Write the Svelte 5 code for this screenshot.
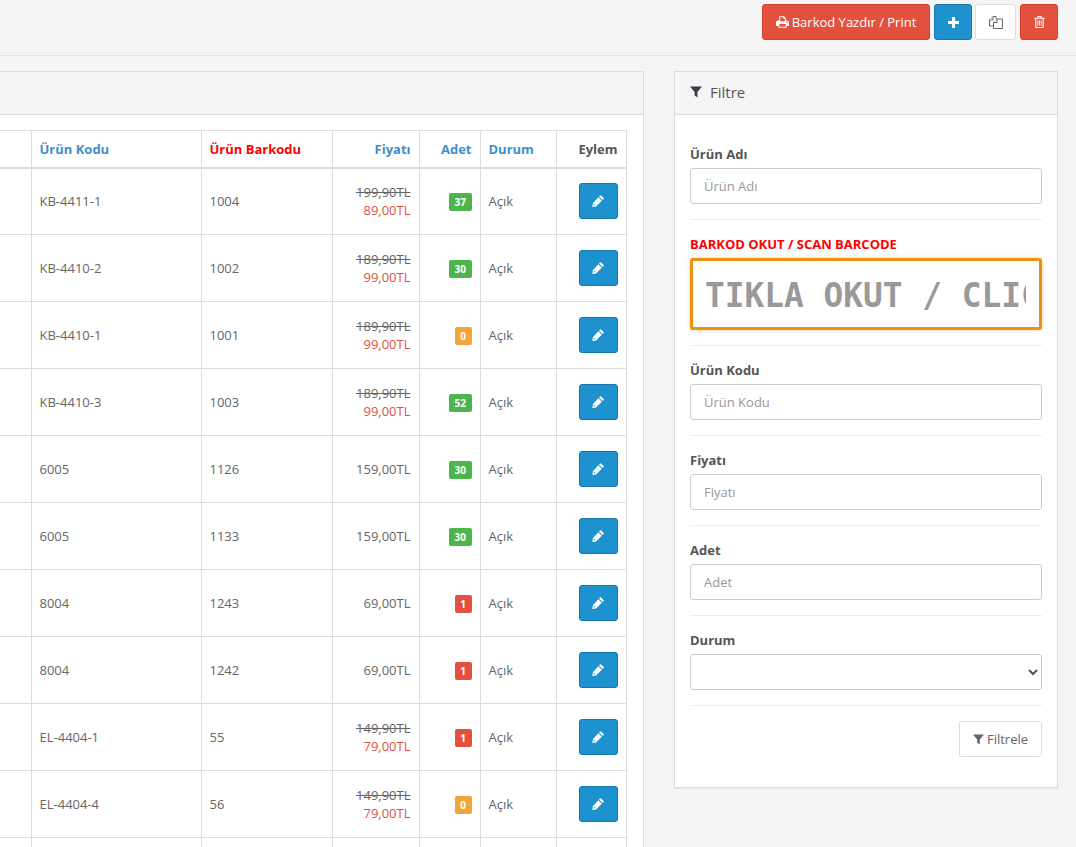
<script>
  const rows = [
    { code: 'KB-4411-1', bar: '1004', old: '199,90TL', price: '89,00TL', qty: 37, tone: 'ok' },
    { code: 'KB-4410-2', bar: '1002', old: '189,90TL', price: '99,00TL', qty: 30, tone: 'ok' },
    { code: 'KB-4410-1', bar: '1001', old: '189,90TL', price: '99,00TL', qty: 0, tone: 'warn' },
    { code: 'KB-4410-3', bar: '1003', old: '189,90TL', price: '99,00TL', qty: 52, tone: 'ok' },
    { code: '6005', bar: '1126', price: '159,00TL', qty: 30, tone: 'ok' },
    { code: '6005', bar: '1133', price: '159,00TL', qty: 30, tone: 'ok' },
    { code: '8004', bar: '1243', price: '69,00TL', qty: 1, tone: 'bad' },
    { code: '8004', bar: '1242', price: '69,00TL', qty: 1, tone: 'bad' },
    { code: 'EL-4404-1', bar: '55', old: '149,90TL', price: '79,00TL', qty: 1, tone: 'bad' },
    { code: 'EL-4404-4', bar: '56', old: '149,90TL', price: '79,00TL', qty: 0, tone: 'warn' },
    { code: '', bar: '', price: '', qty: null, tone: 'ok', blank: true }
  ];
  const fields = [
    { label: 'Ürün Kodu' },
    { label: 'Fiyatı' },
    { label: 'Adet' }
  ];
</script>

<div class="page">
  <header class="top">
    <button class="btn red print">
      <svg class="ic" viewBox="0 0 16 14" width="13" height="12"><path fill="currentColor" d="M4 0h6l2 2v3h1.500A2.500 2.500 0 0 1 16 7.500V12h-3v2H3v-2H0V7.500A2.500 2.500 0 0 1 2.500 5H4V0zm1.200 1.200V6h5.600V3H9V1.200H5.200zM4.200 9.500v3.300h7.600V9.500H4.200zM13.500 6.500a.8.8 0 1 0 0 1.600.8.8 0 0 0 0-1.600z"/></svg>
      Barkod Yazdır / Print
    </button>
    <button class="btn blue sq">
      <svg viewBox="0 0 12 12" width="11" height="11"><path fill="currentColor" d="M4.300 0h3.400v4.300H12v3.400H7.700V12H4.300V7.700H0V4.300h4.300z"/></svg>
    </button>
    <button class="btn white sq copy">
      <svg viewBox="0 0 14 14" width="14" height="14" fill="#fff" stroke="#666" stroke-width="1"><path d="M.5 5L4 1.500h3V4"/><path d="M.5 5v6h4"/><path d="M.5 5H4V1.500"/><path d="M4.500 7.500L8 4h5.500v9.500h-9z"/><path d="M4.500 7.500H8V4"/></svg>
    </button>
    <button class="btn red sq">
      <svg viewBox="0 0 12 14" width="11" height="12"><path fill="currentColor" d="M4 0h4l1 2h3v1.300h-1V13a1 1 0 0 1-1 1H2a1 1 0 0 1-1-1V3.300H0V2h3l1-2zm.6 1.200L4.300 2h3.400l-.3-.8H4.600zM2.300 3.300v9.400h7.400V3.300H2.300zM3.500 5h1v6.500h-1V5zm2 0h1v6.500h-1V5zm2 0h1v6.500h-1V5z"/></svg>
    </button>
  </header>

  <main class="content">
    <section class="panel list">
      <div class="head"></div>
      <div class="body">
        <table>
          <colgroup>
            <col class="c0" /><col class="c1" /><col class="c2" /><col class="c3" /><col class="c4" /><col class="c5" /><col class="c6" />
          </colgroup>
          <thead>
            <tr>
              <th></th>
              <th class="link">Ürün Kodu</th>
              <th class="hot">Ürün Barkodu</th>
              <th class="link r">Fiyatı</th>
              <th class="link r">Adet</th>
              <th class="link">Durum</th>
              <th class="r">Eylem</th>
            </tr>
          </thead>
          <tbody>
            {#each rows as row}
              <tr>
                <td></td>
                <td class="num">{row.code}</td>
                <td class="num">{row.bar}</td>
                <td class="r">
                  {#if row.old}
                    <div class="old">{row.old}</div>
                    <div class="sale">{row.price}</div>
                  {:else}
                    {row.price}
                  {/if}
                </td>
                <td class="r">
                  {#if !row.blank}<span class="badge {row.tone}">{row.qty}</span>{/if}
                </td>
                <td>{row.blank ? '' : 'Açık'}</td>
                <td class="r">
                  {#if !row.blank}
                    <button class="btn blue edit">
                      <svg viewBox="0 0 12 12" width="12" height="12"><path fill="currentColor" d="M9 .4l2.600 2.600a.8.8 0 0 1 0 1.100l-1 1L7 1.500l1-1.100A.8.8 0 0 1 9 .4zM6.300 2.200l3.500 3.500L4 11.500l-3.700.6.600-3.800 5.400-6.100zM2 8.700l-.4 1.800 1.800-.4z"/></svg>
                    </button>
                  {/if}
                </td>
              </tr>
            {/each}
          </tbody>
        </table>
      </div>
    </section>

    <aside class="panel filter">
      <div class="head title">
        <svg viewBox="0 0 12 12" width="12" height="12"><path fill="currentColor" d="M0 .5h12L7.400 6v5.500L4.600 9.500V6z"/></svg>
        <span>Filtre</span>
      </div>
      <div class="body form">
        <div class="group first">
          <label for="f-name">Ürün Adı</label>
          <input id="f-name" placeholder="Ürün Adı" />
        </div>
        <div class="group scan">
          <label class="hot" for="f-scan">BARKOD OKUT / SCAN BARCODE</label>
          <input id="f-scan" class="scanner" placeholder="TIKLA OKUT / CLICK TO SCAN" />
        </div>
        {#each fields as f}
          <div class="group">
            <label for={'f-' + f.label}>{f.label}</label>
            <input id={'f-' + f.label} placeholder={f.label} />
          </div>
        {/each}
        <div class="group">
          <label for="f-state">Durum</label>
          <select id="f-state"><option></option></select>
        </div>
        <div class="actions">
          <button class="btn white apply">
            <svg viewBox="0 0 12 12" width="11" height="11"><path fill="currentColor" d="M0 .5h12L7.400 6v5.500L4.600 9.500V6z"/></svg>
            Filtrele
          </button>
        </div>
      </div>
    </aside>
  </main>
</div>

<style>
  :global(body) {
    margin: 0;
    background: #f5f5f5;
    font-family: "Open Sans", sans-serif;
    font-size: 13px;
    color: #666;
  }
  .page {
    height: 847px;
    overflow: hidden;
  }
  .top {
    box-sizing: border-box;
    height: 56px;
    border-bottom: 1px solid #e4e4e4;
    padding: 4px 18px 0 0;
    display: flex;
    justify-content: flex-end;
    gap: 4px;
    margin-bottom: 15px;
  }
  .btn {
    height: 36px;
    box-sizing: border-box;
    border: 1px solid;
    border-radius: 3px;
    font-family: inherit;
    font-size: 13px;
    padding: 0;
    display: inline-flex;
    align-items: center;
    justify-content: center;
    color: #fff;
  }
  .red { background: #e3503e; border-color: #d9402d; }
  .blue { background: #1e91cf; border-color: #1978ab; }
  .white { background: #fff; border-color: #ddd; color: #666; }
  .print { width: 168px; gap: 3px; }
  .sq { width: 38px; }
  .copy { width: 41px; margin: 0 0 0 -1px; }
  .content {
    display: grid;
    grid-template-columns: 644px 384px;
    column-gap: 30px;
    align-items: start;
  }
  .panel {
    border: 1px solid #ddd;
    background: #fff;
  }
  .list { border-left: 0; height: 900px; }
  .head {
    height: 42px;
    background: #f5f5f5;
    border-bottom: 1px solid #ddd;
  }
  .list .body { padding: 15px 16px 0 0; }
  table {
    width: 626px;
    border-collapse: collapse;
    table-layout: fixed;
  }
  .c0 { width: 31px; }
  .c1 { width: 170px; }
  .c2 { width: 131px; }
  .c3 { width: 87px; }
  .c4 { width: 61px; }
  .c5 { width: 76px; }
  .c6 { width: 70px; }
  th, td {
    border: 1px solid #ddd;
    padding: 0 8px;
    text-align: left;
    vertical-align: middle;
    box-sizing: border-box;
  }
  th:first-child, td:first-child { border-left: 0; }
  th {
    height: 37px;
    font-size: 13px;
    font-weight: 700;
    color: #555;
    border-bottom-width: 2px;
  }
  td { height: 67px; color: #666; line-height: 18px; }
  .link { color: #3d8fcc; }
  .hot { color: #f00; }
  .r { text-align: right; }
  .old { text-decoration: line-through; }
  .sale { color: #e3503e; }
  .badge {
    display: inline-block;
    min-width: 5px;
    height: 18px;
    box-sizing: border-box;
    padding: 0 5.5px;
    border-radius: 2px;
    color: #fff;
    font-size: 10px;
    font-weight: 700;
    line-height: 18px;
    vertical-align: middle;
  }
  .ok { background: #4cb64c; }
  .warn { background: #f3a638; }
  .bad { background: #e3503e; }
  .edit { width: 39px; vertical-align: middle; }
  .filter { box-shadow: 0 1px 1px rgba(0,0,0,.05); height: 717px; box-sizing: border-box; }
  .title {
    display: flex;
    align-items: center;
    gap: 8px;
    padding: 0 0 2px 15px;
    box-sizing: border-box;
    height: 43px;
    font-size: 15px;
    color: #555;
  }
  .title svg { color: #3a3f4a; }
  .form { padding: 0 15px; }
  .group {
    padding: 15px 0;
    border-bottom: 1px solid #ededed;
    height: 90px;
    box-sizing: border-box;
  }
  .group.first { padding-top: 30px; height: 105px; }
  .group.scan { height: 126px; }
  label {
    display: block;
    font-weight: 700;
    font-size: 13px;
    line-height: 18px;
    margin-bottom: 5px;
    color: #555;
  }
  label.hot { color: #f00; }
  input, select {
    display: block;
    width: 100%;
    height: 36px;
    box-sizing: border-box;
    border: 1px solid #ccc;
    border-radius: 3px;
    background: #fff;
    padding: 0 13px;
    font-family: inherit;
    font-size: 13px;
    color: #555;
  }
  input::placeholder { color: #999; opacity: 1; }
  input.scanner {
    height: 72px;
    border: 3px solid #ec9213;
    box-shadow: 0 0 4px rgba(240, 150, 20, .4);
    padding: 4px 13px 0 12px;
    font-family: "DejaVu Sans Mono", monospace;
    font-weight: 700;
    font-size: 32.8px;
  }
  .actions {
    display: flex;
    justify-content: flex-end;
    padding-top: 15px;
  }
  .apply { width: 83px; gap: 3px; font-size: 13px; }
</style>
